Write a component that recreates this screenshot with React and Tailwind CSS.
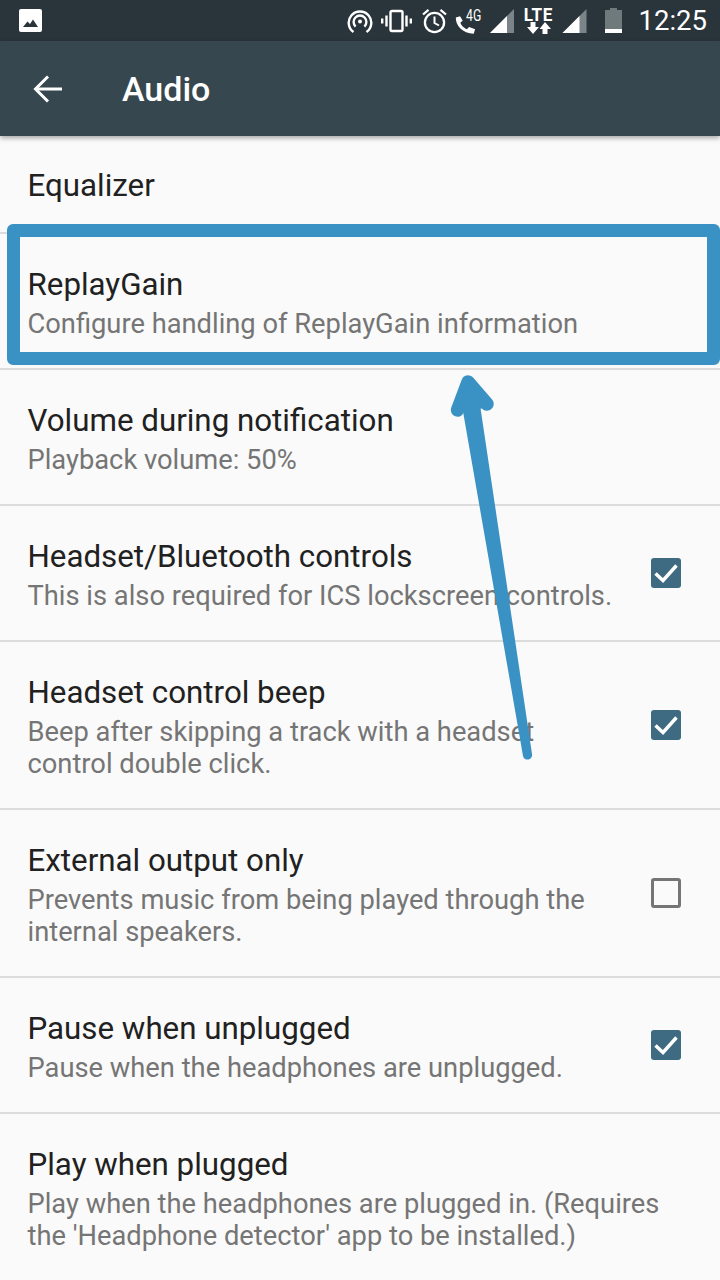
const rows = [
  { t: "Equalizer", h: "h-[98px] pt-[3px]" },
  { t: "ReplayGain", s: ["Configure handling of ReplayGain information"], h: "h-[136px]", box: true },
  { t: "Volume during notification", s: ["Playback volume: 50%"], h: "h-[136px]" },
  { t: "Headset/Bluetooth controls", s: ["This is also required for ICS lockscreen controls."], h: "h-[136px]", c: true },
  { t: "Headset control beep", s: ["Beep after skipping a track with a headset", "control double click."], h: "h-[168px]", c: true },
  { t: "External output only", s: ["Prevents music from being played through the", "internal speakers."], h: "h-[168px]", c: false },
  { t: "Pause when unplugged", s: ["Pause when the headphones are unplugged."], h: "h-[136px]", c: true },
  { t: "Play when plugged", s: ["Play when the headphones are plugged in. (Requires", "the 'Headphone detector' app to be installed.)"], h: "h-[165px]", last: true },
];

function Check({ on }) {
  if (!on)
    return <div className="w-[30px] h-[30px] rounded-[3px] border-[3px] border-[#757575]" />;
  return (
    <svg width="30" height="30" viewBox="0 0 30 30">
      <rect width="30" height="30" rx="3" fill="#3f6b82" />
      <path d="M4.5 15.5 L12 22.5 L25.5 7.5" fill="none" stroke="#fff" strokeWidth="3.4" />
    </svg>
  );
}

function Row({ r }) {
  return (
    <div className={`relative flex items-center pl-[27.5px] pr-[39px] ${r.h} ${r.last ? "" : "border-b-2 border-[#dcdcdc]"}`}>
      <div className="flex-1 min-w-0 whitespace-nowrap">
        <div className="text-[31.3px] leading-[46px] text-[#212121]">{r.t}</div>
        {r.s && r.s.map((l) => (
          <div key={l} className="text-[27.3px] leading-[32px] text-[#757575]">{l}</div>
        ))}
      </div>
      {r.c !== undefined && <Check on={r.c} />}
      {r.box && (
        <div className="absolute left-[7px] right-0 top-[-10px] h-[141px] rounded-[6px] border-[13px] border-[#3a92c4]" />
      )}
    </div>
  );
}

function StatusIcons() {
  return (
    <div className="flex items-center">
      {/* hotspot */}
      <svg width="26" height="26" viewBox="0 0 26 26" fill="none" stroke="#fff" strokeWidth="2.4" className="mr-[8px]">
        <path d="M6.5 24 A11.3 11.3 0 1 1 19.5 24" />
        <path d="M8.6 18.6 A6.4 6.4 0 1 1 17.4 18.6" />
        <circle cx="13" cy="13.5" r="2" fill="#fff" stroke="none" />
      </svg>
      {/* vibrate */}
      <svg width="31" height="24" viewBox="0 0 31 24" fill="none" stroke="#fff" className="mr-[10px]">
        <rect x="9.5" y="2" width="12" height="20" rx="1.5" strokeWidth="2.4" />
        <path d="M5.5 6.5V17.5M25.5 6.5V17.5" strokeWidth="2.4" />
        <path d="M1.2 9.5V14.5M29.8 9.5V14.5" strokeWidth="2.4" />
      </svg>
      {/* alarm */}
      <svg width="25" height="26" viewBox="0 0 25 26" fill="none" stroke="#fff" strokeWidth="2.3" className="mr-[7px]">
        <circle cx="12.5" cy="14.5" r="9.6" />
        <path d="M12.5 8.5V15L17 17.5" strokeWidth="2" />
        <path d="M1 6.5L6.5 1.8M24 6.5L18.5 1.8" />
      </svg>
      {/* phone + 4G */}
      <div className="relative w-[27px] h-[26px] mr-[9px]">
        <svg width="22" height="20" viewBox="0 0 24 24" preserveAspectRatio="none" fill="#fff" className="absolute left-0 bottom-[-1px]">
          <path d="M6.6 1.5 L2 3 C1.4 12 9.5 22.5 21.5 22.5 L23 17 L16.5 14.5 L14 17 C11 16 7.5 12 7 9 L9.5 7 Z" />
        </svg>
        <span className="absolute left-[12px] top-[-2px] text-[17px] leading-[18px] text-white scale-x-[0.72] origin-left">4G</span>
      </div>
      {/* signal */}
      <svg width="24" height="24" viewBox="0 0 24 24" className="mr-[10px]">
        <path d="M0 24 L24 0 V24 Z" fill="#7b8488" />
        <path d="M0 24 L17 7 V24 Z" fill="#fff" />
      </svg>
      {/* LTE */}
      <div className="flex flex-col items-center w-[30px] mr-[8px]">
        <span className="text-[18px] leading-[15px] font-bold text-white tracking-[0.5px] scale-x-[0.95]">LTE</span>
        <svg width="24" height="12" viewBox="0 0 24 12" fill="#fff">
          <path d="M3.5 0H8.5V5H12L6 12L0 5H3.5Z" />
          <path d="M15.5 12H20.5V7H24L18 0L12.5 7H15.5Z" />
        </svg>
      </div>
      {/* signal 2 */}
      <svg width="25" height="24" viewBox="0 0 24 24" className="mr-[18px]">
        <path d="M0 24 L24 0 V24 Z" fill="#7b8488" />
        <path d="M0 24 L17 7 V24 Z" fill="#fff" />
      </svg>
      {/* battery */}
      <svg width="17" height="25" viewBox="0 0 17 25" className="mr-[17px]">
        <path d="M5 0H12V2H17V25H0V2H5Z" fill="#6f7a7d" />
        <rect x="0" y="21" width="17" height="4" fill="#fff" />
      </svg>
      <span className="text-[27.5px] leading-[41px] text-white">12:25</span>
    </div>
  );
}

export default function App() {
  return (
    <div className="relative w-[720px] h-[1280px] overflow-hidden bg-[#fafafa] font-['Roboto',sans-serif]">
      <div className="flex items-center justify-between h-[41px] bg-[#2a343b] pl-[19px] pr-[13px]">
        <svg width="23" height="23" viewBox="0 0 23 23">
          <rect width="23" height="23" rx="2" fill="#fff" />
          <path d="M4 18 L8.5 12.5 L11 15 L14 10.5 L19 18 Z" fill="#2a343b" />
        </svg>
        <StatusIcons />
      </div>
      <div className="relative z-10 flex items-center h-[95px] bg-[#37474f] shadow-[0_2px_5px_rgba(0,0,0,0.35)]">
        <svg width="30" height="28" viewBox="0 0 30 28" fill="none" stroke="#fff" strokeWidth="3" className="ml-[33px]">
          <path d="M29 14H3" />
          <path d="M15 1.5L2.5 14L15 26.5" />
        </svg>
        <span className="ml-[59px] text-[34px] font-medium text-white leading-none">Audio</span>
      </div>
      <div>
        {rows.map((r) => (
          <Row key={r.t} r={r} />
        ))}
      </div>
      {/* hand-drawn annotation arrow */}
      <svg width="720" height="1280" viewBox="0 0 720 1280" className="absolute inset-0 pointer-events-none z-20">
        <path d="M457.5 410 L468 382 L487 404" fill="none" stroke="#3a92c4" strokeWidth="13.5" strokeLinecap="round" strokeLinejoin="round" />
        <path d="M463 388 L475 388 L484 408 L464 412 Z" fill="#3a92c4" />
        <path d="M461 400 L479 398 L532 754 A4.5 4.5 0 0 1 523 756 Z" fill="#3a92c4" />
      </svg>
    </div>
  );
}
